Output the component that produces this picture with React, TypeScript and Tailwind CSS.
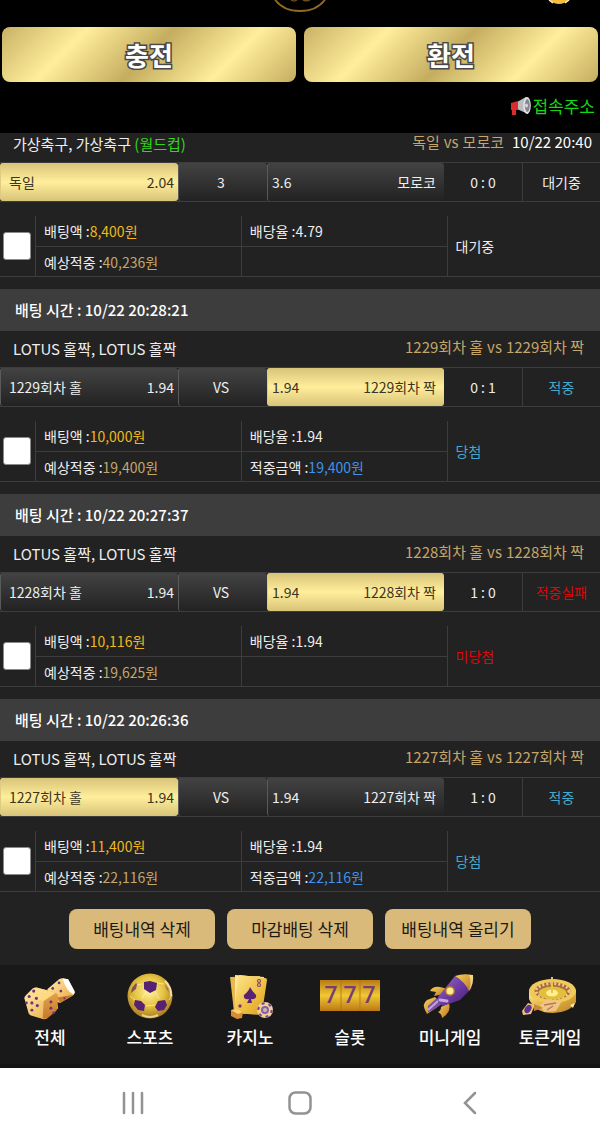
import type { ReactNode } from 'react';
import clsx from 'clsx';

type Pick = 'home' | 'draw' | 'away';
type Tone = 'wait' | 'win' | 'lose';

type Bet = {
  id: number;
  time?: string;
  league: string;
  cup?: string;
  date?: string;
  home: string;
  away: string;
  homeOdds: string;
  drawOdds: string;
  awayOdds: string;
  pick: Pick;
  score: string;
  result: string;
  amount: string;
  expected: string;
  rate: string;
  payout?: string;
  status: string;
  tone: Tone;
};

const BETS: Bet[] = [
  {
    id: 1,
    league: '가상축구, 가상축구',
    cup: '(월드컵)',
    date: '10/22 20:40',
    home: '독일',
    away: '모로코',
    homeOdds: '2.04',
    drawOdds: '3',
    awayOdds: '3.6',
    pick: 'home',
    score: '0 : 0',
    result: '대기중',
    amount: '8,400원',
    expected: '40,236원',
    rate: '4.79',
    status: '대기중',
    tone: 'wait',
  },
  {
    id: 2,
    time: '10/22 20:28:21',
    league: 'LOTUS 홀짝, LOTUS 홀짝',
    home: '1229회차 홀',
    away: '1229회차 짝',
    homeOdds: '1.94',
    drawOdds: 'VS',
    awayOdds: '1.94',
    pick: 'away',
    score: '0 : 1',
    result: '적중',
    amount: '10,000원',
    expected: '19,400원',
    rate: '1.94',
    payout: '19,400원',
    status: '당첨',
    tone: 'win',
  },
  {
    id: 3,
    time: '10/22 20:27:37',
    league: 'LOTUS 홀짝, LOTUS 홀짝',
    home: '1228회차 홀',
    away: '1228회차 짝',
    homeOdds: '1.94',
    drawOdds: 'VS',
    awayOdds: '1.94',
    pick: 'away',
    score: '1 : 0',
    result: '적중실패',
    amount: '10,116원',
    expected: '19,625원',
    rate: '1.94',
    status: '미당첨',
    tone: 'lose',
  },
  {
    id: 4,
    time: '10/22 20:26:36',
    league: 'LOTUS 홀짝, LOTUS 홀짝',
    home: '1227회차 홀',
    away: '1227회차 짝',
    homeOdds: '1.94',
    drawOdds: 'VS',
    awayOdds: '1.94',
    pick: 'home',
    score: '1 : 0',
    result: '적중',
    amount: '11,400원',
    expected: '22,116원',
    rate: '1.94',
    payout: '22,116원',
    status: '당첨',
    tone: 'win',
  },
];

const TONE_CLASS: Record<Tone, string> = {
  wait: 'text-[#eeeeee]',
  win: 'text-[#45a9cf]',
  lose: 'text-[#d80a0a]',
};

function DiceIcon() {
  return (
    <svg viewBox="-3 -2 66 53" className="h-12 w-15" aria-hidden="true">
      <defs>
        <linearGradient id="dice-a" x1="0" y1="0" x2="1" y2="1">
          <stop offset="0" stopColor="#fff0b0" />
          <stop offset="1" stopColor="#e9a33d" />
        </linearGradient>
        <linearGradient id="dice-b" x1="0" y1="0" x2="0" y2="1">
          <stop offset="0" stopColor="#e0963a" />
          <stop offset="1" stopColor="#b5651f" />
        </linearGradient>
      </defs>
      <path d="M27 16 40 5q3-2 6-1l4 1 7 13q1 3-2 5l-14 8-9-3z" fill="url(#dice-a)" />
      <path d="m44 4 6 1 7 13q1 2-1 4-8-4-12-18z" fill="#fff" />
      <path d="m38 25 18-3-15 9z" fill="#c67a2b" />
      <path d="m15 14 20 5q3 1 2 4l2 14-12 11q-1 1-4 1L9 45q-3-1-3-4L2 27q-1-2 1-4l8-8q1-1 4-1z" fill="url(#dice-a)" />
      <path d="m23 29 13-9q3 1 3 4l-1 13q0 2-2 4l-9 7q-3 1-5 0z" fill="url(#dice-b)" opacity=".75" />
      <path d="m15 14 21 6-13 9-20-6 8-8z" fill="#ffdc87" opacity=".8" />
      <g fill="#74307b">
        <circle cx="12" cy="18" r="1.7" />
        <circle cx="7" cy="24" r="1.7" />
        <circle cx="15" cy="26" r="1.7" />
        <circle cx="4" cy="31" r="1.5" />
        <circle cx="10" cy="31" r="1.7" />
        <circle cx="16" cy="34" r="1.7" />
        <circle cx="10" cy="39" r="1.6" />
        <circle cx="31" cy="30" r="1.6" />
        <circle cx="31" cy="37" r="1.6" />
        <circle cx="34" cy="42" r="1.5" />
        <circle cx="40" cy="9" r="1.5" />
        <circle cx="33" cy="15" r="1.5" />
        <circle cx="42" cy="18" r="1.5" />
        <circle cx="46" cy="26" r="1.2" />
      </g>
    </svg>
  );
}

function BallIcon() {
  return (
    <svg viewBox="0 0 60 48" className="h-12 w-15" aria-hidden="true">
      <defs>
        <radialGradient id="ball" cx=".48" cy=".4" r=".6">
          <stop offset="0" stopColor="#fff3a0" />
          <stop offset=".55" stopColor="#e5c23f" />
          <stop offset="1" stopColor="#a87a20" />
        </radialGradient>
      </defs>
      <circle cx="30" cy="23" r="22.5" fill="url(#ball)" />
      <path d="m26 18-4 8m13-8 4 8m-17-15-5 1m20-2 7 1M26 33l9-1m-20-5-5-4m39 4 3-5" stroke="#fff4ae" strokeWidth="1" fill="none" opacity=".7" />
      <g fill="#572174">
        <path d="m24 9 6-1 7 2-1 7-6 3-6-4z" />
        <path d="m15 27 6 1 4 4-1 6-6-1-4-5z" />
        <path d="m38 28 7-1 2 5-3 5-6 1-3-4z" />
        <path d="m16 10 1 1-1 5-5 4 1-5z" opacity=".7" />
        <path d="m45 11 3 4 1 4-3-3z" opacity=".35" />
      </g>
      <path d="M22 42q8 4 16 0" stroke="#fff3bb" strokeWidth="2" fill="none" opacity=".7" />
      <path d="M45 8q7 7 6 15" stroke="#fff8d8" strokeWidth="2" fill="none" opacity=".7" />
    </svg>
  );
}

function CardsIcon() {
  return (
    <svg viewBox="0 0 60 48" className="h-12 w-15" aria-hidden="true">
      <defs>
        <linearGradient id="cards" x1="0" y1="0" x2="1" y2="1">
          <stop offset="0" stopColor="#ffe793" />
          <stop offset=".6" stopColor="#edbd3d" />
          <stop offset="1" stopColor="#d79a29" />
        </linearGradient>
      </defs>
      <path d="m10 4 30-1-4 38-22-2z" fill="#e8b84d" />
      <path d="m15 2 29 2-3 36-26 1z" fill="#ffe79a" />
      <path d="m20 2 25 3q2 0 2 2l-5 33q0 2-2 2l-24-2q-2 0-2-2l4-34q0-2 2-2z" fill="url(#cards)" />
      <path d="M30 14q2 4 6 8 1 5-5 4l1 4h-5l2-4q-6 1-5-4 5-4 6-8z" fill="#572174" />
      <g fill="none" stroke="#7d4675" strokeWidth="1.2">
        <circle cx="39" cy="8" r="1.5" />
        <circle cx="39" cy="12" r="1.5" />
      </g>
      <circle cx="20" cy="33" r="1.7" fill="#813468" />
      <path d="m11 37 6-1 6 3-1 6-5 1-6-3z" fill="#d98c2f" />
      <path d="m11 37 6-1 6 3-5 2z" fill="#ffd07a" />
      <circle cx="45" cy="37" r="8" fill="#f2cf94" />
      <circle cx="45" cy="37" r="6.7" fill="none" stroke="#71449a" strokeWidth="2" strokeDasharray="3 4" />
      <circle cx="45" cy="37" r="4" fill="#8661a8" />
      <circle cx="45" cy="37" r="2" fill="#d9b5b2" />
    </svg>
  );
}

function SlotIcon() {
  return (
    <svg viewBox="0 0 60 48" className="h-12 w-15" aria-hidden="true">
      <defs>
        <linearGradient id="slot" x1="0" y1="0" x2="0" y2="1">
          <stop offset="0" stopColor="#b87a16" />
          <stop offset=".5" stopColor="#f0c832" />
          <stop offset="1" stopColor="#bb7815" />
        </linearGradient>
      </defs>
      <path d="M0 7h60v31H0z" fill="url(#slot)" />
      <path d="M21 7v31M40 7v31" stroke="#b5771a" strokeWidth="1.5" opacity=".6" />
      <g fill="#7b3b75" fontFamily="Roboto, sans-serif" fontSize="23" fontWeight="500" textAnchor="middle">
        <text x="11" y="30">7</text>
        <text x="30" y="30">7</text>
        <text x="49" y="30">7</text>
      </g>
    </svg>
  );
}

function RocketIcon() {
  return (
    <svg viewBox="0 0 60 48" className="h-12 w-15" aria-hidden="true">
      <defs>
        <linearGradient id="rocket" x1="0" y1="0" x2="1" y2="1">
          <stop offset=".1" stopColor="#8f62bd" />
          <stop offset=".5" stopColor="#6d3aa5" />
          <stop offset="1" stopColor="#39205f" />
        </linearGradient>
        <linearGradient id="flame" x1="0" y1="0" x2="1" y2="1">
          <stop offset="0" stopColor="#f7d35a" />
          <stop offset="1" stopColor="#bb711f" />
        </linearGradient>
      </defs>
      <path d="m24 21-10 2 2-4-6-1q3-5 10-4l8 2z" fill="url(#flame)" />
      <path d="m21 34 8-4q3 9-7 15 0-4-4-6 3-1 3-5z" fill="url(#flame)" />
      <path d="m15 24-8 3q-5 4-2 10l2 4 6-4 8-6z" fill="url(#flame)" />
      <path d="m17 25-9 8 0 6 7-3 8-6z" fill="#7d4fa5" />
      <path d="m8 37 10-9" stroke="#c0a7dc" strokeWidth="2" />
      <path d="M18 24 35 3l17 12-12 12-17 6q-6-2-5-9z" fill="url(#rocket)" />
      <path d="M35 3q8-3 18-1 1 9-4 16-4-9-14-15z" fill="url(#flame)" />
      <path d="M49 2h4q1 8-4 16 3-9 0-16z" fill="#fff0ac" opacity=".65" />
      <circle cx="30" cy="18" r="5" fill="#b87821" />
      <circle cx="30" cy="18" r="3.5" fill="#ffe991" />
      <path d="m20 27 7 1" stroke="#c8a8da" strokeWidth="3" strokeLinecap="round" />
    </svg>
  );
}

function RouletteIcon() {
  return (
    <svg viewBox="0 0 60 48" className="h-12 w-15" aria-hidden="true">
      <defs>
        <linearGradient id="wheel" x1="0" y1="0" x2="1" y2="1">
          <stop offset="0" stopColor="#ffe98e" />
          <stop offset=".5" stopColor="#dfb13d" />
          <stop offset="1" stopColor="#b9822a" />
        </linearGradient>
      </defs>
      <path d="M9 17v9q6 14 24 14 18-1 23-11V17z" fill="url(#wheel)" />
      <ellipse cx="32.500" cy="18" rx="23.500" ry="12" fill="#f1cb58" />
      <ellipse cx="32.500" cy="18" rx="18" ry="9" fill="#a56b40" />
      <ellipse cx="32.500" cy="18" rx="16.500" ry="7.500" fill="none" stroke="#f1ca8a" strokeWidth="3" strokeDasharray="2 2" />
      <ellipse cx="32.500" cy="20" rx="14" ry="6.500" fill="#e3bd3c" />
      <ellipse cx="32" cy="20" rx="6" ry="3.500" fill="#fff08d" />
      <path d="M32 4v16M29 7h6" stroke="#e9c34f" strokeWidth="2" />
      <path d="m20 32 8-6 14 2-6 10-12 1z" fill="#efc584" />
      <path d="m24 32 12-2M27 37l6-4" stroke="#b97756" strokeWidth="1.500" />
      <path d="m2 38 6-8 7 2-4 9-8 1z" fill="#f0c374" />
      <ellipse cx="8" cy="36" rx="3" ry="4.500" transform="rotate(35 8 36)" fill="#5b3291" />
      <path d="m14 31 9 4-9 3" fill="#ca883d" />
      <path d="m50 32 5-2-2 5z" fill="#ffe3a8" />
    </svg>
  );
}

function MegaphoneIcon() {
  return (
    <svg viewBox="0 0 22 20" className="h-5 w-[22px]" aria-hidden="true">
      <path d="m7 6 9-5q5 7 2 17L7 13z" fill="#b9bcc0" />
      <path d="M1 7l7-2v9H6v5H2v-5H1z" fill="#dc2b2c" />
      <ellipse cx="17" cy="9.500" rx="3.800" ry="8.500" fill="#e2e4e7" />
      <ellipse cx="17.300" cy="9.500" rx="2.500" ry="6.500" fill="#83878c" />
      <ellipse cx="16.500" cy="9.500" rx="1.500" ry="2" fill="#d5d7da" />
    </svg>
  );
}

const MENU: { label: string; icon: ReactNode }[] = [
  { label: '전체', icon: <DiceIcon /> },
  { label: '스포츠', icon: <BallIcon /> },
  { label: '카지노', icon: <CardsIcon /> },
  { label: '슬롯', icon: <SlotIcon /> },
  { label: '미니게임', icon: <RocketIcon /> },
  { label: '토큰게임', icon: <RouletteIcon /> },
];

function TopBar() {
  return (
    <div className="grid h-[27px] grid-cols-[1fr_auto_1fr] items-start">
      <span />
      <svg viewBox="0 0 60 14" className="h-[14px] w-15" aria-hidden="true">
        <path d="M4-2Q12 11 30 11T56-2" fill="none" stroke="#94681f" strokeWidth="1.800" />
        <path d="M21 0q3 2 6 0m6 0q4 2 8-1" fill="none" stroke="#6e4b18" strokeWidth="1.500" />
      </svg>
      <svg viewBox="0 0 24 6" className="mr-[29px] h-1.5 w-6 justify-self-end" aria-hidden="true">
        <path d="M2-1q4 5 10 5t10-5z" fill="#f5bd3c" />
        <path d="m2 0 4 3M22 0l-4 3" stroke="#fff1cb" strokeWidth="1.500" />
      </svg>
    </div>
  );
}

function GoldButton({ children }: { children: ReactNode }) {
  return (
    <button
      type="button"
      className="h-[55px] flex-1 rounded-lg bg-[linear-gradient(135deg,#c9b165_0%,#ffee9b_25%,#c5ad60_50%,#ffee9b_75%,#c5ad60_100%)] text-[26px] leading-8 font-bold text-white [-webkit-text-stroke:3px_#484848] [paint-order:stroke_fill]"
    >
      {children}
    </button>
  );
}

function OddsButton({ active, className, children }: { active?: boolean; className?: string; children: ReactNode }) {
  return (
    <button
      type="button"
      aria-pressed={active ?? false}
      className={clsx(
        'flex min-w-0 items-center rounded-[3px] border-l pr-1 text-sm whitespace-nowrap',
        active
          ? 'border-[#e0cc7e] bg-[linear-gradient(#d8c479,#ffee9b_50%,#d8c479)] text-[#3a3524]'
          : 'border-[#5a5a5a] bg-[linear-gradient(#434343,#222222)] text-[#eeeeee]',
        className,
      )}
    >
      {children}
    </button>
  );
}

function BetCard({ bet }: { bet: Bet }) {
  return (
    <article className="pb-3">
      {bet.time && (
        <h2 className="bg-[#3d3d3d] px-[15px] text-[15px] leading-[42px] font-medium text-white">
          배팅 시간 : {bet.time}
        </h2>
      )}

      <div className={clsx('flex items-end justify-between leading-5', bet.time ? 'h-9' : 'h-[29px]')}>
        <p className="pb-2 pl-[13px] text-[15px]">
          {bet.league} {bet.cup && <span className="text-[#35d61c]">{bet.cup}</span>}
        </p>
        <p className={clsx('flex gap-2 pb-2.5 text-[#c5a66b]', bet.date ? 'pr-2' : 'pr-4')}>
          <span className="flex gap-1 text-[15px]">
            <span>{bet.home}</span>
            <span>vs</span>
            <span>{bet.away}</span>
          </span>
          {bet.date && <time className="text-[15px] text-white">{bet.date}</time>}
        </p>
      </div>

      <div className="grid h-10 grid-cols-[178fr_89fr_177fr_78fr_78fr] border-y border-[#3d3d3d] text-sm">
        <OddsButton active={bet.pick === 'home'} className="justify-between pl-2">
          <span>{bet.home}</span>
          <span>{bet.homeOdds}</span>
        </OddsButton>
        <OddsButton active={bet.pick === 'draw'} className="justify-center">
          {bet.drawOdds}
        </OddsButton>
        <OddsButton active={bet.pick === 'away'} className="justify-between pl-1">
          <span>{bet.awayOdds}</span>
          <span className="pr-1">{bet.away}</span>
        </OddsButton>
        <span className="flex items-center justify-center">{bet.score}</span>
        <span className={clsx('flex items-center justify-center border-l border-[#3d3d3d]', TONE_CLASS[bet.tone])}>
          {bet.result}
        </span>
      </div>

      <table className="mt-3.5 w-full table-fixed border-separate border-spacing-0 text-sm">
        <colgroup>
          <col className="w-9" />
          <col className="w-[34.3%]" />
          <col className="w-[34.3%]" />
          <col />
        </colgroup>
        <tbody>
          <tr className="h-[31px]">
            <td rowSpan={2} className="border-r border-b border-[#3d3d3d] p-0 pl-[3px] align-middle">
              <input
                type="checkbox"
                aria-label={`${bet.league} ${bet.amount}`}
                className="block size-7 appearance-none rounded-[3px] border border-[#8a8a8a] bg-white checked:bg-[#d9ba7b]"
              />
            </td>
            <td className="border-r border-b border-[#3d3d3d] p-0 pl-2">
              배팅액 :<span className="text-[#f0b91c]">{bet.amount}</span>
            </td>
            <td className="border-r border-b border-[#3d3d3d] p-0 pl-2">배당율 :{bet.rate}</td>
            <td rowSpan={2} className={clsx('border-b border-[#3d3d3d] p-0 pl-2', TONE_CLASS[bet.tone])}>
              {bet.status}
            </td>
          </tr>
          <tr className="h-[30px]">
            <td className="border-r border-b border-[#3d3d3d] p-0 pl-2">
              예상적중 :<span className="text-[#c5a66b]">{bet.expected}</span>
            </td>
            <td className="border-r border-b border-[#3d3d3d] p-0 pl-2">
              {bet.payout && (
                <>
                  적중금액 :<span className="text-[#3f93ec]">{bet.payout}</span>
                </>
              )}
            </td>
          </tr>
        </tbody>
      </table>
    </article>
  );
}

function ActionButton({ children }: { children: ReactNode }) {
  return (
    <button
      type="button"
      className="h-10 w-[146px] rounded-lg bg-[#d9ba7b] text-[17px] leading-6 text-[#1c1a15]"
    >
      {children}
    </button>
  );
}

function SystemNav() {
  return (
    <nav className="flex h-[70px] items-center justify-around bg-white px-12 text-[#929292]">
      <button type="button" aria-label="최근 앱">
        <svg viewBox="0 0 24 24" className="size-6" fill="none" stroke="currentColor" strokeWidth="2.500" strokeLinecap="round">
          <path d="M4 2v20M13 2v20M22 2v20" />
        </svg>
      </button>
      <button type="button" aria-label="홈">
        <svg viewBox="0 0 24 24" className="size-6" fill="none" stroke="currentColor" strokeWidth="2.500">
          <rect x="1.500" y="1.500" width="21" height="21" rx="6" />
        </svg>
      </button>
      <button type="button" aria-label="뒤로">
        <svg viewBox="0 0 24 24" className="size-6" fill="none" stroke="currentColor" strokeWidth="2.500" strokeLinecap="round">
          <path d="M19 2 9 12l10 10" />
        </svg>
      </button>
    </nav>
  );
}

export default function App() {
  return (
    <div className="bg-[#222222] font-['Noto_Sans_CJK_KR',sans-serif] text-[#eeeeee]">
      <header className="overflow-hidden bg-black">
        <TopBar />
        <div className="flex gap-2 px-0.5">
          <GoldButton>충전</GoldButton>
          <GoldButton>환전</GoldButton>
        </div>
        <div className="flex h-[51px] items-center justify-end pr-[5px] pb-1">
          <a href="#address" className="flex items-center text-[17px] leading-6 text-[#14d814]">
            <MegaphoneIcon />
            접속주소
          </a>
        </div>
      </header>

      <main>
        {BETS.map((bet) => (
          <BetCard key={bet.id} bet={bet} />
        ))}
        <div className="flex justify-center gap-3 pt-[5px] pb-4">
          <ActionButton>배팅내역 삭제</ActionButton>
          <ActionButton>마감배팅 삭제</ActionButton>
          <ActionButton>배팅내역 올리기</ActionButton>
        </div>
      </main>

      <nav className="grid grid-cols-6 border-b-4 border-[#151515] bg-[#191919] pt-2 pb-[15px]">
        {MENU.map((item) => (
          <a key={item.label} href="#menu" className="flex flex-col items-center gap-1 text-[17px] leading-6 font-medium text-white">
            {item.icon}
            {item.label}
          </a>
        ))}
      </nav>
      <SystemNav />
    </div>
  );
}
